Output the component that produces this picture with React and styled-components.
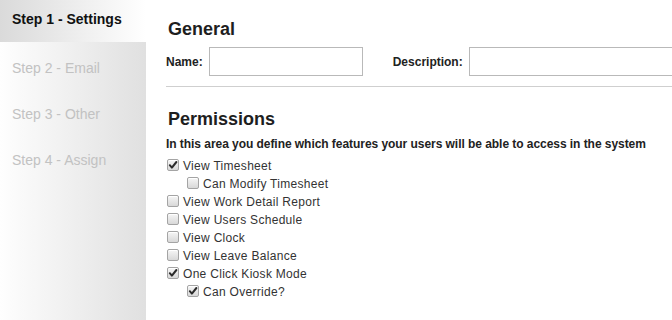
import React from "react";
import styled, { createGlobalStyle } from "styled-components";

const GlobalStyle = createGlobalStyle`
    html, body {
        margin: 0;
        padding: 0;
        background: #fff;
        overflow: hidden;
    }
    body {
        font-family: "Liberation Sans", Arial, sans-serif;
        color: #222;
    }
`

const Page = styled.div`
    display: flex;
    width: 672px;
    height: 320px;
    overflow: hidden;
`
const Sidebar = styled.div`
    flex: 0 0 146px;
    display: flex;
    flex-direction: column;
    background: linear-gradient(to right, #fefefe 0%, #e0e0e0 100%);
`
const Step = styled.div`
    padding: 11px 12px 15px;
    font-size: 14px;
    line-height: 16px;
    white-space: nowrap;
    color: ${p => (p.$active ? "#111" : "#c2c2c2")};
    font-weight: ${p => (p.$active ? "bold" : "normal")};
    background: ${p => (p.$active ? "linear-gradient(to right, #dadada 0%, #fff 100%)" : "transparent")};
    margin-bottom: ${p => (p.$active ? "7px" : "4px")};
`
const Main = styled.div`
    flex: 1;
    min-width: 0;
    padding-left: 20px;
    overflow: hidden;
`
const Heading = styled.h2`
    margin: ${p => p.$top || 0}px 0 0;
    padding-left: 2px;
    font-size: 18px;
    line-height: 22px;
    font-weight: bold;
    color: #1e1e1e;
`
const FormRow = styled.div`
    display: flex;
    align-items: center;
    margin-top: 7px;
    white-space: nowrap;
`
const Label = styled.label`
    font-size: 12px;
    font-weight: bold;
    color: #222;
    margin-right: 6px;
`
const Input = styled.input`
    box-sizing: border-box;
    width: ${p => p.$width}px;
    height: 29px;
    border: 1px solid #b9b9b9;
    margin: 0 30px 0 0;
    padding: 0 4px;
    flex: none;
`
const Rule = styled.hr`
    margin: 10px 0 21px;
    border: 0;
    border-top: 1px solid #cfcfcf;
    width: 600px;
`
const Intro = styled.p`
    margin: 5px 0 4px;
    font-size: 12px;
    line-height: 18px;
    font-weight: bold;
    letter-spacing: -0.05px;
    color: #222;
    white-space: nowrap;
`
const Option = styled.div`
    display: flex;
    align-items: center;
    height: 18px;
    padding-left: ${p => (p.$nested ? 21 : 1)}px;
    font-size: 12px;
    letter-spacing: 0.3px;
    color: #333;
    white-space: nowrap;
`
const Box = styled.span`
    box-sizing: border-box;
    display: inline-flex;
    align-items: center;
    justify-content: center;
    width: 12px;
    height: 12px;
    margin: -2px 4px 0 0;
    border: 1px solid #a4a4a4;
    border-radius: 2px;
    background: linear-gradient(to bottom, #f6f6f6 0%, #d8d8d8 100%);
    box-shadow: inset 0 1px 0 #fff;
`

const steps = ["Step 1 - Settings", "Step 2 - Email", "Step 3 - Other", "Step 4 - Assign"]

const permissions = [
    { label: "View Timesheet", checked: true },
    { label: "Can Modify Timesheet", nested: true },
    { label: "View Work Detail Report" },
    { label: "View Users Schedule" },
    { label: "View Clock" },
    { label: "View Leave Balance" },
    { label: "One Click Kiosk Mode", checked: true },
    { label: "Can Override?", nested: true, checked: true },
]

function CheckBox({ checked }) {
    return (
        <Box>
            {checked &&
                <svg width="10" height="10" viewBox="0 0 10 10">
                    <path d="M1.8 5.2 L3.9 7.6 L8.4 2" fill="none" stroke="#2b2b2b" strokeWidth="2" strokeLinecap="round" strokeLinejoin="round" />
                </svg>
            }
        </Box>
    )
}

export default function App() {
    return (
        <Page>
            <GlobalStyle />
            <Sidebar>
                {steps.map((s, i) => (
                    <Step key={s} $active={i === 0}>{s}</Step>
                ))}
            </Sidebar>
            <Main>
                <Heading $top={18}>General</Heading>
                <FormRow>
                    <Label>Name:</Label>
                    <Input $width={154} />
                    <Label>Description:</Label>
                    <Input $width={260} />
                </FormRow>
                <Rule />
                <Heading>Permissions</Heading>
                <Intro>In this area you define which features your users will be able to access in the system</Intro>
                {permissions.map(p => (
                    <Option key={p.label} $nested={p.nested}>
                        <CheckBox checked={p.checked} />
                        {p.label}
                    </Option>
                ))}
            </Main>
        </Page>
    )
}
